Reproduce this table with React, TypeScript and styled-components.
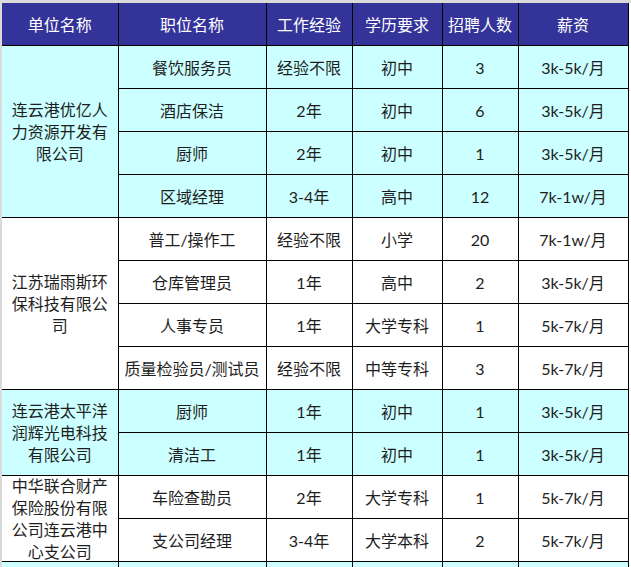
import styled, { createGlobalStyle } from 'styled-components';

const GlobalStyle = createGlobalStyle`
  html, body {
    margin: 0;
    padding: 0;
    background: #ffffff;
    overflow: hidden;
  }
  body {
    font-family: "Lato", "Noto Sans CJK SC", sans-serif;
  }
`;

const Sheet = styled.div`
  width: 631px;
  height: 567px;
  overflow: hidden;
  box-sizing: border-box;
  border-top: 3px solid #dadada;
  border-left: 2px solid #dadada;
  background: #ffffff;
`;

const Table = styled.table`
  border-collapse: collapse;
  table-layout: fixed;
  width: 626px;
  font-size: 16px;
  color: #1e1e1e;
`;

const HeadCell = styled.th`
  height: 42px;
  padding: 0;
  background: #333399;
  color: #ffffff;
  font-weight: normal;
  text-align: center;
  vertical-align: middle;
  border-left: 1px solid #000;
  border-right: 1px solid #000;
  border-bottom: 1px solid #000;

  &:first-child {
    border-left: none;
  }
`;

const Cell = styled.td<{ $tint: boolean }>`
  height: 42px;
  padding: 0;
  background: ${(p) => (p.$tint ? '#ccffff' : '#ffffff')};
  text-align: center;
  vertical-align: middle;
  border: 1px solid #000;
  white-space: nowrap;

  &:first-child {
    border-left: none;
  }
`;

const CompanyCell = styled(Cell)`
  white-space: normal;
  line-height: 22px;
  padding: 0 3px;
`;

const CompanyText = styled.div`
  height: 0;
  display: flex;
  align-items: center;
  justify-content: center;
  overflow: visible;
`;

type Job = [string, string, string, string, string];

type Company = { name: string; tint: boolean; jobs: Job[] };

const companies: Company[] = [
  {
    name: '连云港优亿人力资源开发有限公司',
    tint: true,
    jobs: [
      ['餐饮服务员', '经验不限', '初中', '3', '3k-5k/月'],
      ['酒店保洁', '2年', '初中', '6', '3k-5k/月'],
      ['厨师', '2年', '初中', '1', '3k-5k/月'],
      ['区域经理', '3-4年', '高中', '12', '7k-1w/月'],
    ],
  },
  {
    name: '江苏瑞雨斯环保科技有限公司',
    tint: false,
    jobs: [
      ['普工/操作工', '经验不限', '小学', '20', '7k-1w/月'],
      ['仓库管理员', '1年', '高中', '2', '3k-5k/月'],
      ['人事专员', '1年', '大学专科', '1', '5k-7k/月'],
      ['质量检验员/测试员', '经验不限', '中等专科', '3', '5k-7k/月'],
    ],
  },
  {
    name: '连云港太平洋润辉光电科技有限公司',
    tint: true,
    jobs: [
      ['厨师', '1年', '初中', '1', '3k-5k/月'],
      ['清洁工', '1年', '初中', '1', '3k-5k/月'],
    ],
  },
  {
    name: '中华联合财产保险股份有限公司连云港中心支公司',
    tint: false,
    jobs: [
      ['车险查勘员', '2年', '大学专科', '1', '5k-7k/月'],
      ['支公司经理', '3-4年', '大学本科', '2', '5k-7k/月'],
    ],
  },
  {
    name: '',
    tint: true,
    jobs: [['', '', '', '', '']],
  },
];

const headers = ['单位名称', '职位名称', '工作经验', '学历要求', '招聘人数', '薪资'];
const widths = [116, 148, 86, 90, 76, 110];

export default function App() {
  return (
    <>
      <GlobalStyle />
      <Sheet>
        <Table>
          <colgroup>
            {widths.map((w, i) => (
              <col key={i} style={{ width: w }} />
            ))}
          </colgroup>
          <thead>
            <tr>
              {headers.map((h) => (
                <HeadCell key={h}>{h}</HeadCell>
              ))}
            </tr>
          </thead>
          <tbody>
            {companies.map((c, ci) =>
              c.jobs.map((job, ji) => (
                <tr key={`${ci}-${ji}`}>
                  {ji === 0 && (
                    <CompanyCell $tint={c.tint} rowSpan={c.jobs.length}>
                      <CompanyText>
                        <span>{c.name}</span>
                      </CompanyText>
                    </CompanyCell>
                  )}
                  {job.map((v, vi) => (
                    <Cell key={vi} $tint={c.tint}>
                      {v}
                    </Cell>
                  ))}
                </tr>
              ))
            )}
          </tbody>
        </Table>
      </Sheet>
    </>
  );
}
